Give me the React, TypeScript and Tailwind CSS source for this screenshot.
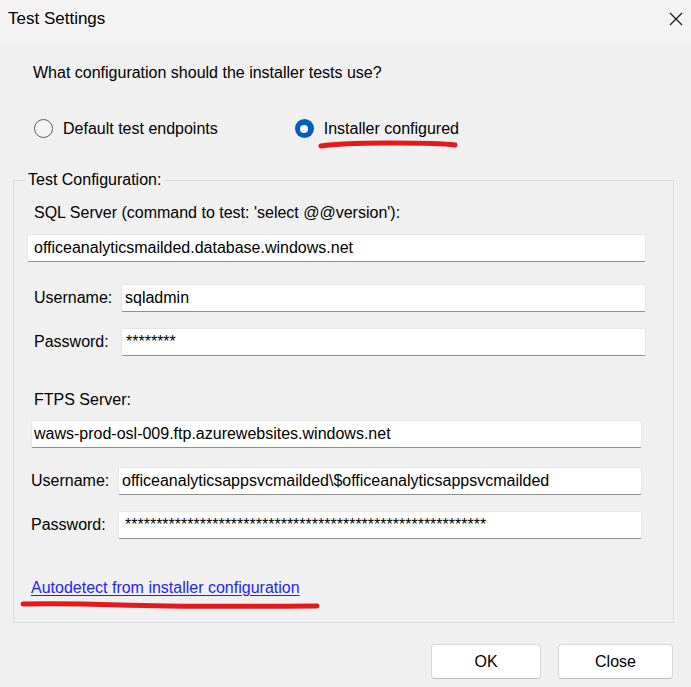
import React from 'react';

const Field: React.FC<{ value: string; className?: string }> = ({ value, className }) => (
  <div
    className={`h-[28px] shrink-0 bg-white border border-[#e6e6e6] border-b-[#8d8d8d] rounded-[2px] flex items-center px-[6px] whitespace-nowrap overflow-hidden ${className ?? ''}`}
  >
    {value}
  </div>
);

const Radio: React.FC<{ checked?: boolean; label: string }> = ({ checked, label }) => (
  <div className="flex items-center gap-[10px]">
    {checked ? (
      <span className="w-[19px] h-[19px] rounded-full bg-[#005fb8] flex items-center justify-center">
        <span className="w-[8px] h-[8px] rounded-full bg-white" />
      </span>
    ) : (
      <span className="w-[19px] h-[19px] rounded-full border border-[#5f5f5f] bg-[#f4f4f4]" />
    )}
    <span>{label}</span>
  </div>
);

export default function App() {
  return (
    <div
      className="relative w-[691px] h-[687px] bg-[#f0f0f0] text-[16px] leading-[18px] text-black overflow-hidden"
      style={{ fontFamily: '"Liberation Sans", Arial, sans-serif' }}
    >
      {/* Title bar */}
      <div className="h-[42px] bg-[#f3f3f3] flex items-center justify-between pl-[8px] pr-[4px]">
        <span className="text-[17px] pb-[4px]">Test Settings</span>
        <svg width="22" height="22" viewBox="0 0 22 22" className="mb-[4px]">
          <path d="M5 5 L17 17 M17 5 L5 17" stroke="#1a1a1a" strokeWidth="1.2" fill="none" />
        </svg>
      </div>

      <div className="pl-[33px] pt-[22px]">What configuration should the installer tests use?</div>

      <div className="flex items-center pl-[34px] mt-[37px] gap-[77px]">
        <Radio label="Default test endpoints" />
        <Radio checked label="Installer configured" />
      </div>

      {/* Group box */}
      <fieldset className="ml-[13px] mt-[33px] w-[661px] h-[452px] border border-[#dadada] px-0">
        <legend className="ml-[11px] px-[3px]">Test Configuration:</legend>

        <div className="pl-[20px] mt-[15px]">SQL Server (command to test: 'select @@version'):</div>
        <Field className="ml-[13px] mt-[12px] w-[619px]" value="officeanalyticsmailded.database.windows.net" />

        <div className="flex items-center mt-[22px]">
          <span className="w-[107px] shrink-0 pl-[20px]">Username:</span>
          <Field className="w-[525px] pl-[3px]" value="sqladmin" />
        </div>
        <div className="flex items-center mt-[16px]">
          <span className="w-[107px] shrink-0 pl-[20px]">Password:</span>
          <Field className="w-[525px] pl-[4px] items-start pt-[4px]" value="********" />
        </div>

        <div className="pl-[20px] mt-[35px]">FTPS Server:</div>
        <Field className="ml-[17px] mt-[11px] w-[611px] pl-[2px]" value="waws-prod-osl-009.ftp.azurewebsites.windows.net" />

        <div className="flex items-center mt-[19px]">
          <span className="w-[104px] shrink-0 pl-[17px]">Username:</span>
          <Field className="w-[524px] pl-[3px]" value="officeanalyticsappsvcmailded\$officeanalyticsappsvcmailded" />
        </div>
        <div className="flex items-center mt-[16px]">
          <span className="w-[104px] shrink-0 pl-[17px]">Password:</span>
          <Field className="w-[524px] pl-[6px] items-start pt-[4px]" value={'*'.repeat(58)} />
        </div>

        <div className="pl-[17px] mt-[40px]">
          <span className="text-[#1f1fff] underline underline-offset-[2px]">Autodetect from installer configuration</span>
        </div>
      </fieldset>

      {/* Buttons */}
      <div className="flex justify-end gap-[17px] pr-[18px] mt-[21px]">
        <button className="w-[110px] h-[35px] bg-white border border-[#d6d6d6] border-b-[#bcbcbc] rounded-[4px]">OK</button>
        <button className="w-[115px] h-[35px] bg-white border border-[#d6d6d6] border-b-[#bcbcbc] rounded-[4px]">Close</button>
      </div>

      {/* Red annotation marks */}
      <svg className="absolute left-0 top-0 pointer-events-none" width="691" height="687">
        <path d="M321 146 Q340 143 390 143 T455 145" stroke="#e3191c" strokeWidth="5" fill="none" strokeLinecap="round" />
        <path d="M23 604 Q60 603 120 605 T317 606" stroke="#e3191c" strokeWidth="5" fill="none" strokeLinecap="round" />
      </svg>
    </div>
  );
}
